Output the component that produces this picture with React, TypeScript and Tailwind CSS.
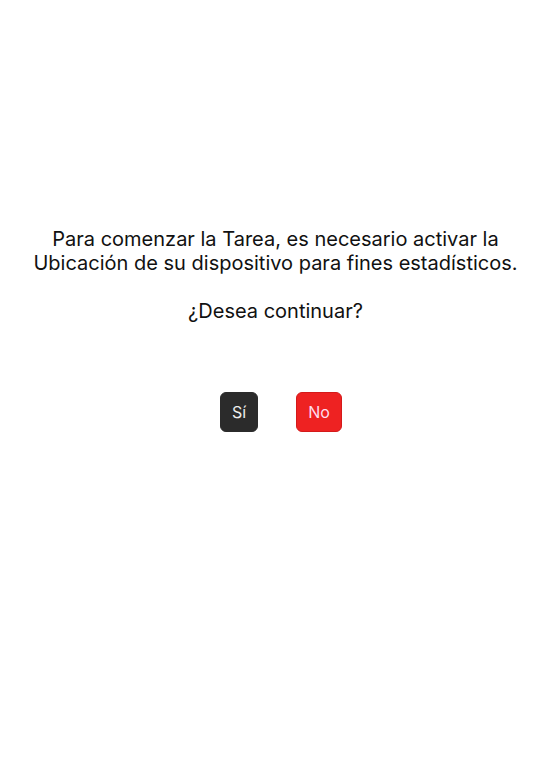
export default function App() {
  return (
    <div className="min-h-[781px] w-full bg-white" style={{ fontFamily: "Inter, 'Noto Sans', sans-serif" }}>
      <div className="flex flex-col items-center pl-[11px] pt-[227px]">
        <p className="text-center text-[20px] leading-6 text-[#111]">
          Para comenzar la Tarea, es necesario activar la
          <br />
          Ubicación de su dispositivo para fines estadísticos.
          <br />
          <br />
          ¿Desea continuar?
        </p>
        <div className="mt-[69px] flex gap-[38px] pl-[11px]">
          <button className="h-10 w-[38px] rounded-md border border-[#2b2b2b] bg-[#2b2b2b] text-[16px] text-[#eee]">
            Sí
          </button>
          <button className="h-10 w-[46px] rounded-md border border-[#d41a1a] bg-[#ee2222] text-[16px] text-[#fde]">
            No
          </button>
        </div>
      </div>
    </div>
  );
}
